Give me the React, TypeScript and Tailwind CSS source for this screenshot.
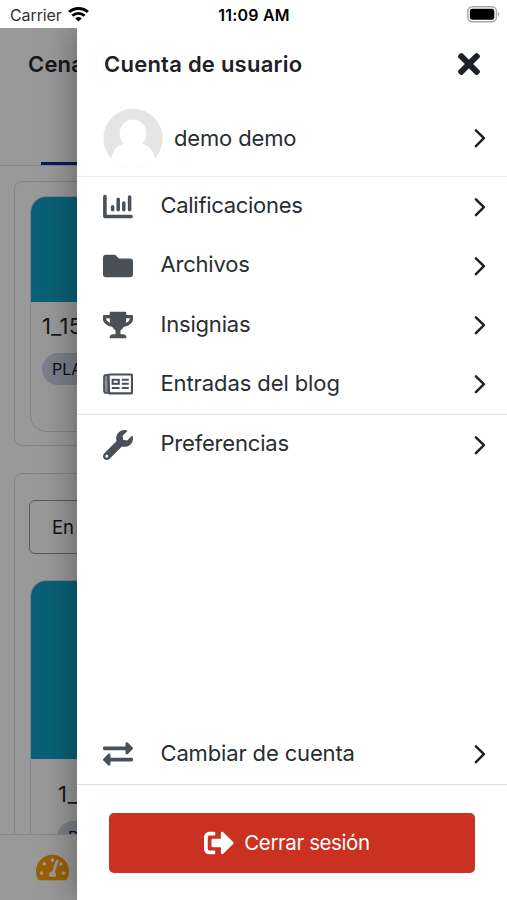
import React from 'react';
import {
  FaExchangeAlt,
  FaFolder,
  FaSignOutAlt,
  FaTachometerAlt,
  FaTimes,
  FaTrophy,
  FaWrench,
} from 'react-icons/fa';

interface IconProps {
  className?: string;
}

interface MenuRowProps {
  icon: React.ComponentType<IconProps>;
  label: string;
  spacing?: string;
}

const ChartIcon: React.FC<IconProps> = ({ className }) => (
  <svg viewBox="0 0 30 30" fill="none" stroke="currentColor" strokeLinecap="round" className={className}>
    <path d="M1.9 4.600v19.900h26.200" strokeWidth="3.6" strokeLinejoin="round" />
    <path d="M9.600 14.700v3M15.200 7.200v10.500M20.800 10.900v6.800M26.600 4.900v12.800" strokeWidth="3.5" />
  </svg>
);

const NewspaperIcon: React.FC<IconProps> = ({ className }) => (
  <svg viewBox="0 0 30 30" fill="none" stroke="currentColor" className={className}>
    <path d="M5.2 5.8H3.4Q1 5.8 1 8.2v13.3Q1 24 3.4 24h3z" fill="#8b9095" strokeWidth="1.7" />
    <rect x="5.6" y="5.5" width="23.4" height="18.9" rx="1" strokeWidth="2.2" />
    <rect x="9.6" y="10.8" width="6.2" height="4" strokeWidth="2" />
    <path d="M18.8 10.8h7M18.8 14.8h7M8.8 19h7.8M18.8 19h7" strokeWidth="2" />
  </svg>
);

const Chevron: React.FC = () => (
  <svg width="12" height="20" viewBox="0 0 12 20" fill="none" className="shrink-0">
    <path d="M1.9 2.3l8 7.9-8 7.9" stroke="#1d2125" strokeWidth="2.5" strokeLinecap="round" strokeLinejoin="round" />
  </svg>
);

const MenuRow: React.FC<MenuRowProps> = ({ icon: Icon, label, spacing = 'tracking-[-0.2px]' }) => (
  <button type="button" className="flex h-[59.25px] w-full items-center pl-[26px] pr-[21px] text-left">
    <Icon className="mr-[27.5px] size-[30px] shrink-0 text-[#495057]" />
    <span className={`flex-1 pb-[3px] text-[22px] leading-7 text-[#282d32] ${spacing}`}>{label}</span>
    <Chevron />
  </button>
);

const StatusBar: React.FC = () => (
  <div className="grid h-7 grid-cols-3 items-center bg-white pl-[10px] pr-[7px] pt-px text-black">
    <div className="flex items-center gap-[6px]">
      <span className="text-[16px] leading-5 tracking-[-0.1px] text-[#333]">Carrier</span>
      <svg width="21" height="15" viewBox="0 0 20 15" preserveAspectRatio="none" fill="none" stroke="#000">
        <path d="M1 5.1a13 13 0 0 1 18 0" strokeWidth="2.8" />
        <path d="M4.2 8.7a8.4 8.4 0 0 1 11.6 0" strokeWidth="2.8" />
        <path d="M10 14.6l-3.1-3.2a4.5 4.5 0 0 1 6.2 0z" fill="#000" stroke="none" />
      </svg>
    </div>
    <span className="whitespace-nowrap pr-[2px] text-center text-[16px] font-semibold leading-5 tracking-[0.2px]">11:09 AM</span>
    <svg width="33" height="17" viewBox="0 0 33 17" className="mb-px justify-self-end">
      <rect x="0.8" y="0.8" width="28.6" height="15" rx="4.5" fill="#fff" stroke="#aaa" strokeWidth="1.5" />
      <rect x="2.9" y="2.8" width="24.4" height="11" rx="2.4" fill="#000" />
      <path d="M31 6v4.6c1.8-.6 1.8-4 0-4.6z" fill="#aaa" />
    </svg>
  </div>
);

const CoursesPage: React.FC = () => (
  <div className="flex h-full flex-col overflow-hidden bg-white">
    <div className="flex h-[138px] shrink-0 flex-col justify-between border-b border-[#dee2e6] pl-[28px] pt-[22px]">
      <h1 className="text-[22px] font-semibold leading-7 tracking-[0.2px] text-[#282828]">Cena</h1>
      <div className="ml-[13px] h-[3px] w-40 bg-[#0f2a9a]" />
    </div>
    <div className="flex min-h-0 flex-1 flex-col gap-[27px] overflow-hidden pl-[14px] pt-[15px]">
      <section className="h-[265px] shrink-0 rounded-l-lg border border-[#d9dbde] pl-[15px] pt-[14px]">
        <div className="h-[236px] overflow-hidden rounded-l-2xl border border-[#d9dbde]">
          <div className="h-[105px] bg-[#0fa2c6]" />
          <p className="pl-[11px] pt-[10px] text-[22px] leading-7 tracking-[0.4px] text-[#282828]">1_15</p>
          <span className="ml-[11px] mt-[13px] inline-flex h-8 w-28 items-center rounded-full bg-[#cfd5ea] pl-[10px] text-[16px] text-[#10163a]">
            PLA
          </span>
        </div>
      </section>
      <section className="h-[500px] shrink-0 rounded-tl-lg border border-[#d9dbde] pl-[14px] pt-[26px]">
        <div className="flex h-[54px] items-center rounded-l-md border-[1.5px] border-[#8f959e] pl-[22px] pt-px text-[18.5px] text-[#1d2125]">
          En
        </div>
        <div className="ml-px mt-[26px] h-[400px] overflow-hidden rounded-tl-2xl border border-[#d9dbde]">
          <div className="h-[178px] bg-[#0fa2c6]" />
          <p className="pl-[27px] pt-[21px] text-[22px] leading-7 tracking-[0.8px] text-[#282828]">1_</p>
          <span className="ml-[26px] mt-[13px] inline-flex h-8 w-28 items-center rounded-full bg-[#cfd5ea] pl-[11px] text-[16px] text-[#10163a]">
            P
          </span>
        </div>
      </section>
    </div>
    <div className="flex h-[66px] shrink-0 items-center border-t border-[#dee2e6] pl-9">
      <FaTachometerAlt className="size-[33px] text-[#ff9f0a]" />
    </div>
  </div>
);

const UserDrawer: React.FC = () => (
  <aside className="absolute inset-y-0 left-[77px] right-0 flex flex-col bg-white shadow-[0_0_36px_rgba(0,0,0,0.4)]">
    <header className="flex h-[72px] shrink-0 items-center justify-between pl-[27px] pr-[22px]">
      <h2 className="text-[22px] font-semibold leading-7 tracking-[0.24px] text-[#1d2125]">Cuenta de usuario</h2>
      <FaTimes className="size-[32px] text-[#1d2125]" />
    </header>
    <button type="button" className="flex h-[77px] shrink-0 items-center border-b border-[#ececec] pl-[26px] pr-[21px] text-left">
      <svg width="60" height="60" viewBox="0 0 60 60" className="mr-[11px] shrink-0">
        <clipPath id="avatar">
          <circle cx="30" cy="30.5" r="29.7" />
        </clipPath>
        <g clipPath="url(#avatar)">
          <rect width="60" height="62" fill="#e5e5e5" />
          <ellipse cx="30" cy="25.5" rx="13.3" ry="14" fill="#fff" />
          <path d="M22.5 33q0 2.500-6 4.500Q10 41 8 51L4 62h52l-4-11Q50 41 43.500 37.500q-6-2-6-4.500z" fill="#fff" />
        </g>
      </svg>
      <span className="flex-1 text-[22px] leading-7 tracking-[-0.15px] text-[#282d32]">demo demo</span>
      <Chevron />
    </button>
    <nav className="border-b border-[#e3e3e3]">
      <MenuRow icon={ChartIcon} label="Calificaciones" spacing="tracking-[-0.3px]" />
      <MenuRow icon={FaFolder} label="Archivos" />
      <MenuRow icon={FaTrophy} label="Insignias" />
      <MenuRow icon={NewspaperIcon} label="Entradas del blog" spacing="tracking-[-0.1px]" />
    </nav>
    <MenuRow icon={FaWrench} label="Preferencias" />
    <footer className="mt-auto">
      <MenuRow icon={FaExchangeAlt} label="Cambiar de cuenta" spacing="tracking-[-0.15px]" />
      <div className="border-t border-[#dedede] px-8 pb-[27px] pt-[28px]">
        <button
          type="button"
          className="flex h-[60px] w-full items-center justify-center gap-[10px] rounded-[5px] bg-[#ca3120] pr-[10px] text-[20.5px] tracking-[-0.4px] text-white"
        >
          <FaSignOutAlt className="size-[30px]" />
          Cerrar sesión
        </button>
      </div>
    </footer>
  </aside>
);

const App: React.FC = () => (
  <div className="flex h-[900px] w-[507px] flex-col overflow-hidden bg-white font-['Inter',sans-serif]">
    <StatusBar />
    <div className="relative min-h-0 flex-1 overflow-hidden">
      <CoursesPage />
      <div className="absolute inset-0 bg-black/40" />
      <UserDrawer />
    </div>
  </div>
);

export default App;
